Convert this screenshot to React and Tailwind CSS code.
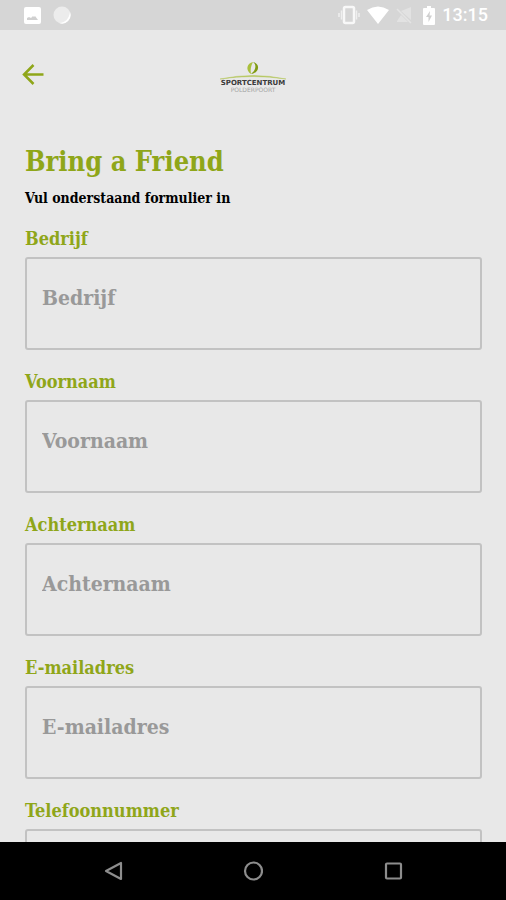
import React from "react";

const fields = [
  { id: "company", label: "Bedrijf", type: "text" },
  { id: "first-name", label: "Voornaam", type: "text" },
  { id: "last-name", label: "Achternaam", type: "text" },
  { id: "email", label: "E-mailadres", type: "email" },
  { id: "phone", label: "Telefoonnummer", type: "tel" },
];

function StatusBar() {
  return (
    <div className="flex h-[30px] shrink-0 items-center justify-between bg-[#d6d6d6] pl-6 pr-[18px] text-white">
      <div className="flex items-center gap-3">
        <svg className="h-[17px] w-[17px]" viewBox="0 0 17 17" aria-hidden="true">
          <rect width="17" height="17" rx="2" fill="#fff" />
          <path d="M3 13V11l2-1 2 1 2-2 1 1 1-1 3 4z" fill="#d0d0d0" />
        </svg>
        <svg className="h-[18px] w-[18px]" viewBox="0 0 18 18" aria-hidden="true">
          <circle cx="9" cy="9" r="8.500" fill="#ececec" />
          <path d="M17 6a8.500 8.500 0 0 1-11 11c6 0 10-4 11-11z" fill="#fff" />
        </svg>
      </div>
      <div className="flex items-center gap-[7px]">
        <svg className="h-5 w-[22px]" viewBox="0 0 22 20" fill="none" stroke="#f8f8f8" aria-hidden="true">
          <rect x="6" y="2" width="10" height="16" rx="1.500" strokeWidth="2.500" />
          <path d="M3.500 5.500v9M18.500 5.500v9M1 8v4M21 8v4" strokeWidth="1.500" stroke="#efefef" />
        </svg>
        <svg className="h-[18px] w-[22px]" viewBox="0 0 22 18" fill="#fff" aria-hidden="true">
          <path d="M0 4Q11-3 22 4L11 18z" />
        </svg>
        <svg className="h-[18px] w-[16px]" viewBox="0 0 16 18" aria-hidden="true">
          <path d="M15 1v13L5 5zM1 16V15l4-6 7 7z" fill="#e2e2e2" />
          <path d="M1 3l14 14" stroke="#e4e4e4" strokeWidth="1.500" />
        </svg>
        <svg className="ml-1 h-[19px] w-[12px]" viewBox="0 0 12 19" aria-hidden="true">
          <path d="M4 0h4v2h3a1 1 0 0 1 1 1v15a1 1 0 0 1-1 1H1a1 1 0 0 1-1-1V3a1 1 0 0 1 1-1h3z" fill="#fff" />
          <path d="M7 5l-4 6h2.500v5L9 9.500H6.500z" fill="#cfcfcf" />
        </svg>
        <span className="font-['Roboto',sans-serif] text-lg font-medium leading-5">13:15</span>
      </div>
    </div>
  );
}

function Logo() {
  return (
    <svg
      className="h-9 w-[68px]"
      viewBox="0 0 68 36"
      role="img"
      aria-label="Sportcentrum Polderpoort"
      fontFamily="'DejaVu Sans', sans-serif"
    >
      <path d="M34 5c-6 1-8 8-2 12-1-5 0-8 2-12z" fill="#a9bf3b" />
      <path d="M34 5c3 2 3 6 1 9l-3 3c8-1 10-10 2-12z" fill="#809b12" />
      <path d="M1 22Q34 15 67 22Q34 17 1 22z" fill="#b4c65c" stroke="#b4c65c" strokeWidth="0.500" />
      <text x="34" y="28" textAnchor="middle" fontSize="7" fontWeight="700" fill="#3a3a3a">
        SPORTCENTRUM
      </text>
      <text x="34" y="35" textAnchor="middle" fontSize="6" fontWeight="400" fill="#a6a6a6">
        POLDERPOORT
      </text>
    </svg>
  );
}

function Field({ id, label, type }) {
  return (
    <div className="flex flex-col gap-1.5">
      <label htmlFor={id} className="text-lg leading-6 text-[#8fa619]">
        {label}
      </label>
      <input
        id={id}
        name={id}
        type={type}
        placeholder={label}
        className="h-[93px] w-full rounded-[3px] border-2 border-[#c2c2c2] bg-transparent px-[15px] pb-3 text-[21px] text-[#333] outline-none placeholder:text-[#999] placeholder:opacity-100"
      />
    </div>
  );
}

function NavigationBar() {
  return (
    <nav className="flex h-[58px] shrink-0 items-center justify-center gap-[120px] bg-black text-[#8d8d8d]">
      <button type="button" aria-label="Terug">
        <svg className="h-5 w-5" viewBox="0 0 20 20" fill="none" stroke="currentColor" strokeWidth="2.200" strokeLinejoin="round" aria-hidden="true">
          <path d="M18 2v16L3 10z" />
        </svg>
      </button>
      <button type="button" aria-label="Startscherm">
        <svg className="h-5 w-5" viewBox="0 0 20 20" fill="none" stroke="currentColor" strokeWidth="2.200" aria-hidden="true">
          <circle cx="10.500" cy="10" r="8.500" />
        </svg>
      </button>
      <button type="button" aria-label="Overzicht">
        <svg className="h-5 w-5" viewBox="0 0 20 20" fill="none" stroke="currentColor" strokeWidth="2.200" aria-hidden="true">
          <rect x="3" y="2.500" width="15" height="15" rx="1" />
        </svg>
      </button>
    </nav>
  );
}

export default function App() {
  return (
    <div className="flex h-screen flex-col bg-[#e8e8e8] font-['Roboto_Slab','DejaVu_Serif_Condensed','DejaVu_Serif',serif] font-bold">
      <StatusBar />
      <header className="grid h-[90px] shrink-0 grid-cols-[1fr_auto_1fr] items-center px-[22px]">
        <button type="button" aria-label="Vorige pagina" className="justify-self-start text-[#8fa619]">
          <svg className="h-[22px] w-[22px]" viewBox="0 0 22 22" fill="none" stroke="currentColor" strokeWidth="2.500" aria-hidden="true">
            <path d="M21.500 10.500H2M11.500 1L2 10.500l9.500 9.500" />
          </svg>
        </button>
        <Logo />
      </header>
      <main className="min-h-0 flex-1 overflow-y-auto pl-[25px] pr-6 pt-[22px] [scrollbar-width:none]">
        <h1 className="text-[27px] leading-10 text-[#8fa619]">Bring a Friend</h1>
        <p className="mt-1 text-sm leading-6 text-black">Vul onderstaand formulier in</p>
        <form className="mt-[17px] flex flex-col gap-5 pb-6">
          {fields.map((field) => (
            <Field key={field.id} {...field} />
          ))}
        </form>
      </main>
      <NavigationBar />
    </div>
  );
}
